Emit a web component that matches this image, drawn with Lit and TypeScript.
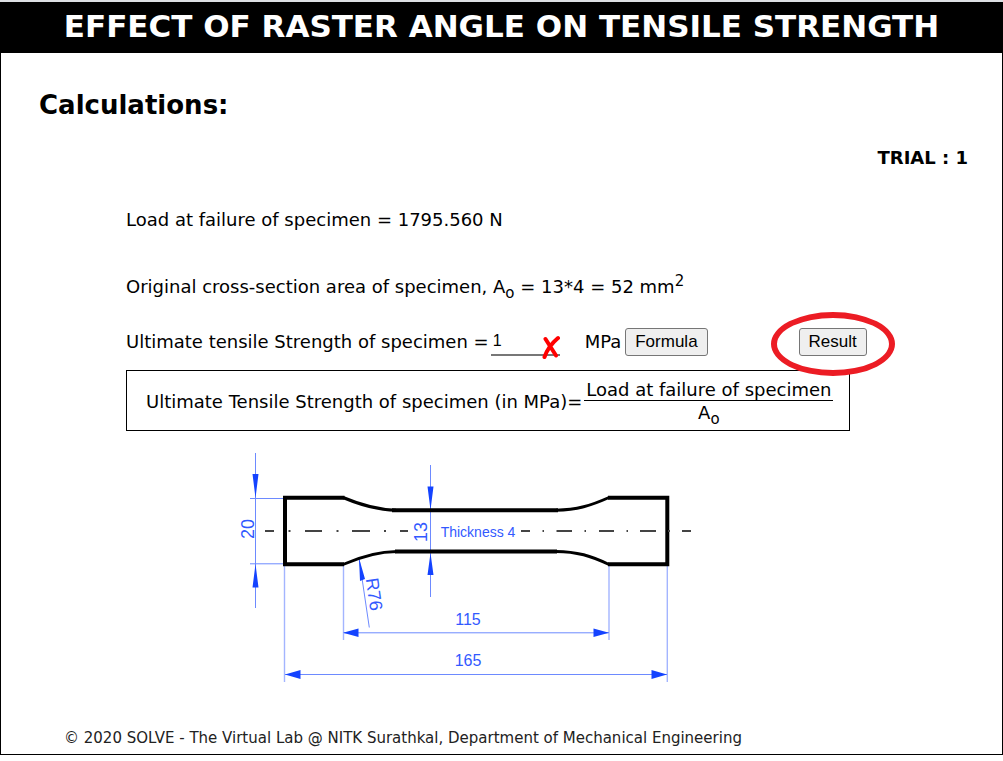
import { LitElement, html, css, svg } from "lit";
import { customElement, state } from "lit/decorators.js";

@customElement("specimen-drawing")
class SpecimenDrawing extends LitElement {
  static styles = css`
    :host {
      display: block;
    }
    svg {
      display: block;
      width: 480px;
      max-width: 100%;
      height: auto;
    }
    .outline {
      fill: none;
      stroke: #000;
      stroke-width: 4;
    }
    .fillet {
      fill: none;
      stroke: #000;
      stroke-width: 3;
    }
    .axis {
      stroke: #444;
      stroke-width: 2;
    }
    .dim {
      stroke: #6d8aff;
      stroke-width: 1;
      fill: none;
    }
    .ext {
      stroke: #a3b5ff;
      stroke-width: 1.4;
      fill: none;
    }
    .arrow {
      fill: #1443ff;
    }
    text {
      font-family: "Liberation Sans", Arial, sans-serif;
      font-size: 16px;
      fill: #3259ff;
    }
    .note {
      font-size: 14px;
    }
    .turned {
      font-size: 18px;
    }
  `;

  private axisMarks = [
    [265, 274], [288.5, 290.5], [305, 322], [336.5, 338.5], [352, 370],
    [384, 386], [400, 408], [521, 530], [542.5, 544], [556.5, 572],
    [584.5, 586], [599, 614], [626.5, 628], [640, 656], [668, 670], [682, 691],
  ];

  render() {
    return html`
      <svg viewBox="220 450 480 236" role="img" aria-label="Tensile specimen dimensions">
        <path class="ext" d="M284.5 565V682M343.5 565V640M609 565V640M667.3 565V682" />
        <path
          class="dim"
          d="M255.5 453V608M250 498.5H285M250 563.8H285M430.5 465V597M344 632.8H609M285 674.5H667M359 558L369.3 627.5"
        />
        <path
          class="arrow"
          d="M252.5 474H258.5L255.5 498ZM252.5 587.5H258.5L255.5 564ZM427.5 486.5H433.5L430.5 510ZM427.5 575H433.5L430.5 553ZM343 632.8L358.5 628.5V637ZM609 632.8L593.5 628.5V637ZM285 674.5L300.5 670V679ZM667 674.5L651.5 670V679ZM359 558L360 581L365 579Z"
        />
        <path class="outline" d="M344.5 497.8H285V564.2H344M608 497.8H667.3V564.2H608" />
        <path class="outline" d="M392 510.2H558M395 551.4H557" />
        <path
          class="fillet"
          d="M343 497.5C362 505.5 378 510 396 510.2M609 497.5C591 505.5 577 510 556 510.2M343 564.5C362 556 378 551.5 397 551.4M609 564.5C591 556 577 551.5 556 551.4"
        />
        ${this.axisMarks.map(([a, b]) => svg`<line class="axis" x1=${a} x2=${b} y1="531" y2="531" />`)}
        <text class="note" x="478" y="537" text-anchor="middle">Thickness 4</text>
        <text x="468" y="625" text-anchor="middle">115</text>
        <text x="468" y="666" text-anchor="middle">165</text>
        <text class="turned" text-anchor="middle" transform="translate(254 529) rotate(-90)">20</text>
        <text class="turned" text-anchor="middle" transform="translate(427 532) rotate(-90)">13</text>
        <text class="turned" text-anchor="middle" transform="translate(368 595) rotate(82)">R76</text>
      </svg>
    `;
  }
}

@customElement("app-root")
class AppRoot extends LitElement {
  @state() private answer = "1";
  @state() private showFormula = true;

  static styles = css`
    :host {
      display: block;
      font-family: Verdana, "DejaVu Sans", sans-serif;
      font-size: 18px;
      line-height: 24px;
      color: #000;
      background: #fff;
    }
    * {
      box-sizing: border-box;
    }
    .page {
      border-top: 2px solid #dcdfe3;
    }
    .frame {
      border: 1px solid #000;
    }
    h1 {
      margin: 0;
      padding: 4px 0 7px;
      background: #000;
      color: #fff;
      font-size: 31px;
      line-height: 39px;
      text-align: center;
    }
    h2 {
      margin: 0;
      padding: 36px 38px 0;
      font-size: 26px;
      line-height: 32px;
    }
    .trial {
      margin: 0;
      padding: 25px 34px 0;
      text-align: right;
      font-weight: bold;
    }
    .work {
      padding: 38px 40px 0 125px;
    }
    p {
      margin: 0;
    }
    .area {
      margin-top: 43px;
    }
    sub,
    sup {
      font-size: 15px;
      line-height: 0;
    }
    .entry {
      display: flex;
      align-items: center;
      margin-top: 29px;
      height: 28px;
    }
    .answer {
      position: relative;
      margin-left: 2px;
      width: 69px;
    }
    .answer input {
      display: block;
      width: 100%;
      height: 28px;
      border: 0;
      border-bottom: 2px solid #777;
      padding: 0 2px;
      background: none;
      font: 16px "Liberation Sans", Arial, sans-serif;
      outline: none;
    }
    .cross {
      position: absolute;
      right: 0;
      bottom: -4px;
      width: 18px;
      height: 25px;
    }
    .unit {
      margin: 0 4px 0 25px;
    }
    button {
      height: 28px;
      padding: 0 9px;
      border: 1px solid #767676;
      border-radius: 3px;
      background: #efefef;
      color: #000;
      font: 17px "Liberation Sans", Arial, sans-serif;
    }
    .result {
      position: relative;
      margin-left: 91px;
    }
    .ring {
      position: absolute;
      top: -16px;
      left: -28px;
      width: 124px;
      height: 64px;
      border: 6px solid #ec1c24;
      border-radius: 50%;
      pointer-events: none;
    }
    .formula {
      display: flex;
      align-items: center;
      width: fit-content;
      margin-top: 14px;
      border: 1px solid #000;
      padding: 8px 16px 5px 19px;
    }
    .fraction {
      display: flex;
      flex-direction: column;
      align-items: center;
      margin-left: 2px;
    }
    .top {
      padding: 0 2px;
      border-bottom: 1px solid #000;
      line-height: 21px;
    }
    specimen-drawing {
      margin: 19px 0 0 94px;
    }
    footer {
      padding: 40px 63px 4px;
      font-size: 15px;
      color: #222;
    }
  `;

  render() {
    return html`
      <div class="page">
        <main class="frame">
          <h1>EFFECT OF RASTER ANGLE ON TENSILE STRENGTH</h1>
          <h2>Calculations:</h2>
          <p class="trial">TRIAL : 1</p>
          <section class="work">
            <p>Load at failure of specimen = 1795.560 N</p>
            <p class="area">Original cross-section area of specimen, A<sub>o</sub> = 13*4 = 52 mm<sup>2</sup></p>
            <div class="entry">
              <label for="uts">Ultimate tensile Strength of specimen =</label>
              <span class="answer">
                <input
                  id="uts"
                  type="text"
                  .value=${this.answer}
                  @input=${(e: Event) => (this.answer = (e.target as HTMLInputElement).value)}
                />
                <svg class="cross" viewBox="0 0 18 25" aria-hidden="true">
                  <path d="M3.5 4L14 20.5M16 3C10 8 5 15 2.5 22" fill="none" stroke="#f00" stroke-width="4" stroke-linecap="round" />
                </svg>
              </span>
              <span class="unit">MPa</span>
              <button type="button" @click=${() => (this.showFormula = !this.showFormula)}>Formula</button>
              <span class="result"><button type="button">Result</button><span class="ring"></span></span>
            </div>
            ${this.showFormula
              ? html`<div class="formula">
                  <span>Ultimate Tensile Strength of specimen (in MPa)=</span>
                  <span class="fraction">
                    <span class="top">Load at failure of specimen</span>
                    <span>A<sub>o</sub></span>
                  </span>
                </div>`
              : null}
            <specimen-drawing></specimen-drawing>
          </section>
          <footer>© 2020 SOLVE - The Virtual Lab @ NITK Surathkal, Department of Mechanical Engineering</footer>
        </main>
      </div>
    `;
  }
}
